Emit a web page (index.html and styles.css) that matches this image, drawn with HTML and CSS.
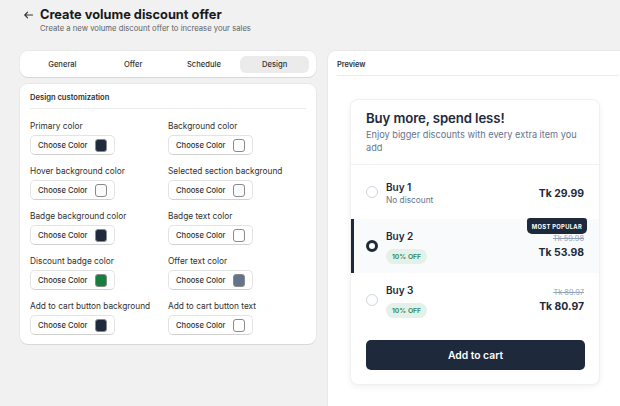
FILE: index.html
```html
<!DOCTYPE html>
<html lang="en">
<head>
    <meta charset="UTF-8">
    <title>Create volume discount offer</title>
    <link rel="stylesheet" href="styles.css">
</head>
<body>
    <header class="page-head">
        <svg class="back" width="9" height="8" viewBox="0 0 9 8" fill="none" stroke="#303030" stroke-width="1.1" stroke-linecap="round" stroke-linejoin="round">
            <path d="M8.5 4H0.8M3.6 1.2L0.8 4l2.8 2.8"/>
        </svg>
        <div>
            <h1>Create volume discount offer</h1>
            <p>Create a new volume discount offer to increase your sales</p>
        </div>
    </header>

    <div class="layout">
        <div class="left-col">
            <nav class="tabs card">
                <span class="tab">General</span>
                <span class="tab">Offer</span>
                <span class="tab">Schedule</span>
                <span class="tab active">Design</span>
            </nav>

            <section class="card design">
                <h2>Design customization</h2>
                <div class="fields">
                    <div class="field">
                        <label>Primary color</label>
                        <button class="picker">Choose Color <i class="swatch" style="background:#1e293b"></i></button>
                    </div>
                    <div class="field">
                        <label>Background color</label>
                        <button class="picker">Choose Color <i class="swatch" style="background:#ffffff"></i></button>
                    </div>
                    <div class="field">
                        <label>Hover background color</label>
                        <button class="picker">Choose Color <i class="swatch" style="background:#f8fafc"></i></button>
                    </div>
                    <div class="field">
                        <label>Selected section background</label>
                        <button class="picker">Choose Color <i class="swatch" style="background:#f8fafc"></i></button>
                    </div>
                    <div class="field">
                        <label>Badge background color</label>
                        <button class="picker">Choose Color <i class="swatch" style="background:#1e293b"></i></button>
                    </div>
                    <div class="field">
                        <label>Badge text color</label>
                        <button class="picker">Choose Color <i class="swatch" style="background:#ffffff"></i></button>
                    </div>
                    <div class="field">
                        <label>Discount badge color</label>
                        <button class="picker">Choose Color <i class="swatch" style="background:#15803d"></i></button>
                    </div>
                    <div class="field">
                        <label>Offer text color</label>
                        <button class="picker">Choose Color <i class="swatch" style="background:#64748b"></i></button>
                    </div>
                    <div class="field">
                        <label>Add to cart button background</label>
                        <button class="picker">Choose Color <i class="swatch" style="background:#1e293b"></i></button>
                    </div>
                    <div class="field">
                        <label>Add to cart button text</label>
                        <button class="picker">Choose Color <i class="swatch" style="background:#ffffff"></i></button>
                    </div>
                </div>
            </section>
        </div>

        <section class="card preview">
            <h2>Preview</h2>
            <div class="offer">
                <div class="offer-head">
                    <h3>Buy more, spend less!</h3>
                    <p>Enjoy bigger discounts with every extra item you add</p>
                </div>

                <div class="option">
                    <span class="radio"></span>
                    <div class="opt-info">
                        <div class="opt-title">Buy 1</div>
                        <div class="opt-sub">No discount</div>
                    </div>
                    <div class="opt-price">
                        <div class="now">Tk 29.99</div>
                    </div>
                </div>

                <div class="option selected">
                    <span class="popular">MOST POPULAR</span>
                    <span class="radio"></span>
                    <div class="opt-info">
                        <div class="opt-title">Buy 2</div>
                        <span class="off">10% OFF</span>
                    </div>
                    <div class="opt-price">
                        <div class="was">Tk 59.98</div>
                        <div class="now">Tk 53.98</div>
                    </div>
                </div>

                <div class="option">
                    <span class="radio"></span>
                    <div class="opt-info">
                        <div class="opt-title">Buy 3</div>
                        <span class="off">10% OFF</span>
                    </div>
                    <div class="opt-price">
                        <div class="was">Tk 89.97</div>
                        <div class="now">Tk 80.97</div>
                    </div>
                </div>

                <button class="cart-btn">Add to cart</button>
            </div>
        </section>
    </div>
</body>
</html>
```

FILE: styles.css
```css
* {
    margin: 0;
    padding: 0;
    box-sizing: border-box;
    font-family: Inter, 'Noto Sans', sans-serif;
}

body {
    background: #f1f1f1;
    color: #303030;
    overflow: hidden;
    width: 620px;
    height: 406px;
}

.page-head {
    display: flex;
    gap: 7px;
    padding: 7px 0 0 24px;
    height: 51px;
}

.back {
    margin-top: 4px;
}

.page-head h1 {
    font-size: 12.8px;
    font-weight: 700;
    line-height: 15px;
    color: #1a1a1a;
}

.page-head p {
    font-size: 7.7px;
    color: #616161;
    margin-top: 2px;
}

.layout {
    display: grid;
    grid-template-columns: 296px 300px;
    gap: 12px;
    padding-left: 20px;
}

.left-col {
    display: flex;
    flex-direction: column;
    gap: 7px;
}

.card {
    background: #fff;
    border-radius: 8px;
    box-shadow: 0 1px 0 #d8d8d8, 0 0 0 1px #e9e9e9;
}

.tabs {
    display: grid;
    grid-template-columns: repeat(4, 1fr);
    gap: 2px;
    padding: 5px 7px 4px 8px;
}

.tab {
    font-size: 7.6px;
    font-weight: 500;
    color: #303030;
    text-align: center;
    line-height: 17px;
    border-radius: 6px;
}

.tab.active {
    background: #ebebeb;
}

.design {
    padding: 9px 10px;
}

.design h2,
.preview h2 {
    font-size: 7.6px;
    font-weight: 600;
    color: #303030;
    line-height: 10px;
    padding-bottom: 5px;
    border-bottom: 1px solid #ebebeb;
}

.preview h2 {
    font-size: 7.4px;
}

.fields {
    display: grid;
    grid-template-columns: 138px 138px;
    row-gap: 10px;
    padding-top: 11px;
}

.field label {
    display: block;
    font-size: 8.3px;
    line-height: 12px;
    color: #303030;
    margin-bottom: 3px;
}

.picker {
    display: flex;
    align-items: center;
    justify-content: space-between;
    width: 85px;
    height: 20px;
    padding: 0 7px;
    background: #fff;
    border: 1px solid #e3e3e3;
    border-bottom-color: #d0d0d0;
    border-radius: 5px;
    font-size: 7.6px;
    font-weight: 500;
    color: #303030;
}

.swatch {
    width: 12px;
    height: 13px;
    border-radius: 3px;
    border: 1px solid #8a8a8a;
}

.preview {
    height: 370px;
    padding: 9px 9px 0 9px;
    border-radius: 8px 0 0 0;
}

.offer {
    width: 250px;
    margin: 23px 0 0 13px;
    background: #fff;
    border-radius: 8px;
    border: 1px solid #eef0f3;
    box-shadow: 0 2px 6px rgba(15, 23, 42, 0.06);
    padding-bottom: 14px;
}

.offer-head {
    padding: 10px 15px 10px 15px;
    border-bottom: 1px solid #eef0f3;
}

.offer-head h3 {
    font-size: 13.2px;
    font-weight: 600;
    color: #1e293b;
    line-height: 17px;
    letter-spacing: -0.1px;
}

.offer-head p {
    font-size: 9.2px;
    line-height: 13px;
    color: #64748b;
    margin-top: 1px;
}

.option {
    position: relative;
    display: flex;
    align-items: center;
    gap: 8px;
    height: 54px;
    padding: 0 15px 0 12px;
    border-left: 3px solid transparent;
}

.option.selected {
    background: #f8fafc;
    border-left-color: #1e293b;
}

.radio {
    width: 12px;
    height: 12px;
    border-radius: 50%;
    border: 1.5px solid #cbd5e1;
    background: #fff;
}

.selected .radio {
    border: 3.5px solid #1e293b;
}

.opt-info {
    flex: 1;
}

.opt-title {
    font-size: 10px;
    font-weight: 600;
    color: #1e293b;
    line-height: 14px;
}

.opt-sub {
    font-size: 8.3px;
    color: #64748b;
    margin-top: 1px;
}

.off {
    display: inline-block;
    margin-top: 2px;
    padding: 3px 6px;
    border-radius: 8px;
    background: #e3f1e8;
    color: #2f855a;
    font-size: 6.8px;
    font-weight: 600;
}

.opt-price {
    text-align: right;
}

.was {
    font-size: 7.4px;
    line-height: 11px;
    color: #94a3b8;
    text-decoration: line-through;
}

.now {
    font-size: 10.4px;
    font-weight: 700;
    color: #1e293b;
    margin-top: 2px;
}

.popular {
    position: absolute;
    top: -1px;
    right: 12px;
    background: #1e293b;
    color: #fff;
    font-size: 5.8px;
    font-weight: 700;
    letter-spacing: 0.3px;
    padding: 5px 5px 4px;
    border-radius: 3px 3px 5px 5px;
}

.cart-btn {
    display: block;
    width: 219px;
    height: 30px;
    margin: 13px 0 0 15px;
    border: none;
    border-radius: 5px;
    background: #1e293b;
    color: #fff;
    font-size: 10.3px;
    font-weight: 600;
}
```
